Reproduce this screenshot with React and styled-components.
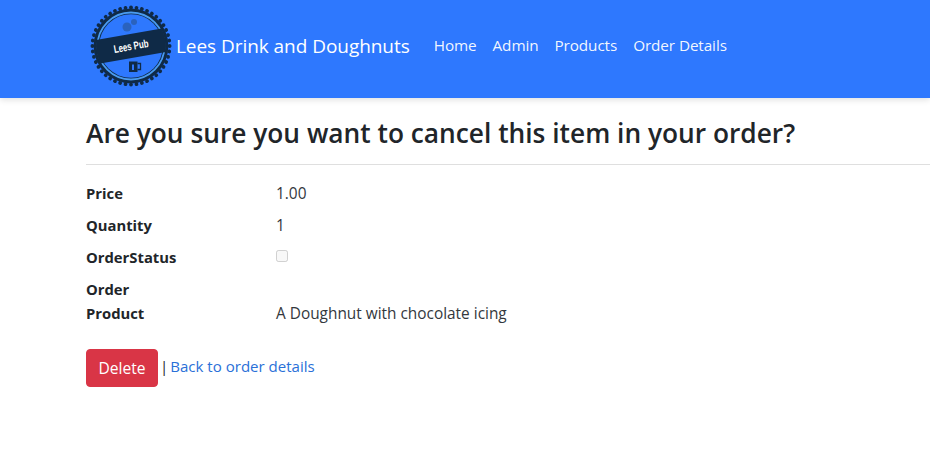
import React from 'react';
import styled, { createGlobalStyle } from 'styled-components';

const GlobalStyle = createGlobalStyle`
  html, body {
    margin: 0;
    background: #fff;
  }
  body {
    font-family: "Open Sans", "Noto Sans", sans-serif;
    font-size: 15px;
    color: #212529;
    overflow: hidden;
  }
`;

const Navbar = styled.nav`
  height: 98px;
  background: #2e78fe;
  box-shadow: 0 2px 6px rgba(0, 0, 0, 0.12);
  padding: 0 0 0 90px;
  display: flex;
  align-items: flex-start;
`;

const Brand = styled.a`
  display: flex;
  align-items: center;
  height: 92px;
  color: #fff;
  font-size: 19px;
  letter-spacing: -0.05px;
  white-space: nowrap;
`;

const LogoSvg = styled.svg`
  width: 82px;
  height: 82px;
  margin-right: 4px;
  flex: none;
`;

const NavList = styled.div`
  display: flex;
  gap: 16px;
  margin-left: 24px;
  padding-top: 35px;
`;

const NavLink = styled.a`
  color: rgba(255, 255, 255, 0.95);
  font-size: 15.3px;
  line-height: 21px;
  letter-spacing: -0.1px;
  white-space: nowrap;
`;

const Main = styled.main`
  padding: 17px 0 0 86px;
`;

const Title = styled.h2`
  margin: 0;
  font-size: 26.3px;
  line-height: 36px;
  font-weight: 600;
  white-space: nowrap;
`;

const Rule = styled.hr`
  margin: 13px 0 16px;
  border: 0;
  border-top: 1px solid #dfdfdf;
`;

const Details = styled.dl`
  margin: 0;
  display: grid;
  grid-template-columns: 190px 1fr;
`;

const Term = styled.dt`
  font-weight: 700;
  font-size: 14.8px;
  line-height: 24px;
  width: 100px;
  padding-bottom: 8px;
  color: #212529;
`;

const Desc = styled.dd`
  margin: 0;
  font-size: 15.4px;
  line-height: 24px;
  color: #33383d;
  display: flex;
  align-items: ${(p) => (p.$bottom ? 'flex-end' : 'flex-start')};
  padding: 1px 0 7px;
`;

const Check = styled.input`
  width: 12px;
  height: 12px;
  margin: 4px 0 0;
`;

const Actions = styled.div`
  display: flex;
  align-items: flex-start;
  margin-top: 16px;
  font-size: 15px;
`;

const DeleteButton = styled.button`
  width: 72px;
  height: 38px;
  background: #d93546;
  border: 1px solid #d93546;
  border-radius: 4px;
  color: #fff;
  font: inherit;
  font-size: 15.6px;
  padding: 0;
  margin-right: 2px;
`;

const Separator = styled.span`
  line-height: 35px;
  margin-right: 2px;
  color: #212529;
`;

const BackLink = styled.a`
  color: #2a70d8;
  font-size: 15.05px;
  line-height: 35px;
`;

function Logo() {
  const teeth = [];
  for (let i = 0; i < 44; i++) {
    teeth.push(
      <circle key={i} cx="41" cy="2.4" r="1.9" fill="#0f2a47" transform={`rotate(${(i * 360) / 44} 41 41)`} />
    );
  }
  return (
    <LogoSvg viewBox="0 0 82 82">
      <defs>
        <clipPath id="badgeClip">
          <circle cx="41" cy="41" r="35" />
        </clipPath>
      </defs>
      {teeth}
      <circle cx="41" cy="41" r="37.4" fill="#0f2a47" />
      <circle cx="41" cy="41" r="33.5" fill="none" stroke="#4a9bf0" strokeWidth="1.8" />
      <circle cx="41" cy="41" r="31.8" fill="#2e78fe" />
      <circle cx="37" cy="22" r="4.5" fill="#2a62bd" />
      <circle cx="44" cy="17" r="3" fill="#2a62bd" />
      <g clipPath="url(#badgeClip)">
        <g transform="rotate(-10 41 41)">
          <rect x="0" y="29" width="82" height="24" fill="#0f2a47" />
          <text x="41" y="45" textAnchor="middle" fill="#fff" fontSize="11" fontWeight="700" fontFamily="'Liberation Sans Narrow', 'Liberation Sans', sans-serif" textLength="35" lengthAdjust="spacingAndGlyphs">Lees Pub</text>
        </g>
      </g>
      <path d="M39 56.5h8.5v10.5h-8.5z" fill="#0f2a47" />
      <path d="M47.5 58.5h3v6h-3" fill="none" stroke="#0f2a47" strokeWidth="1.3" />
      <path d="M43 59.5v5.5" stroke="#2e78fe" strokeWidth="2" />
    </LogoSvg>
  );
}

export default function App() {
  return (
    <>
      <GlobalStyle />
      <Navbar>
        <Brand>
          <Logo />
          Lees Drink and Doughnuts
        </Brand>
        <NavList>
          <NavLink>Home</NavLink>
          <NavLink>Admin</NavLink>
          <NavLink>Products</NavLink>
          <NavLink>Order Details</NavLink>
        </NavList>
      </Navbar>
      <Main>
        <Title>Are you sure you want to cancel this item in your order?</Title>
        <Rule />
        <Details>
          <Term>Price</Term>
          <Desc>1.00</Desc>
          <Term>Quantity</Term>
          <Desc>1</Desc>
          <Term>OrderStatus</Term>
          <Desc><Check type="checkbox" disabled /></Desc>
          <Term>Order Product</Term>
          <Desc $bottom>A Doughnut with chocolate icing</Desc>
        </Details>
        <Actions>
          <DeleteButton>Delete</DeleteButton>
          <Separator>|</Separator>
          <BackLink>Back to order details</BackLink>
        </Actions>
      </Main>
    </>
  );
}
